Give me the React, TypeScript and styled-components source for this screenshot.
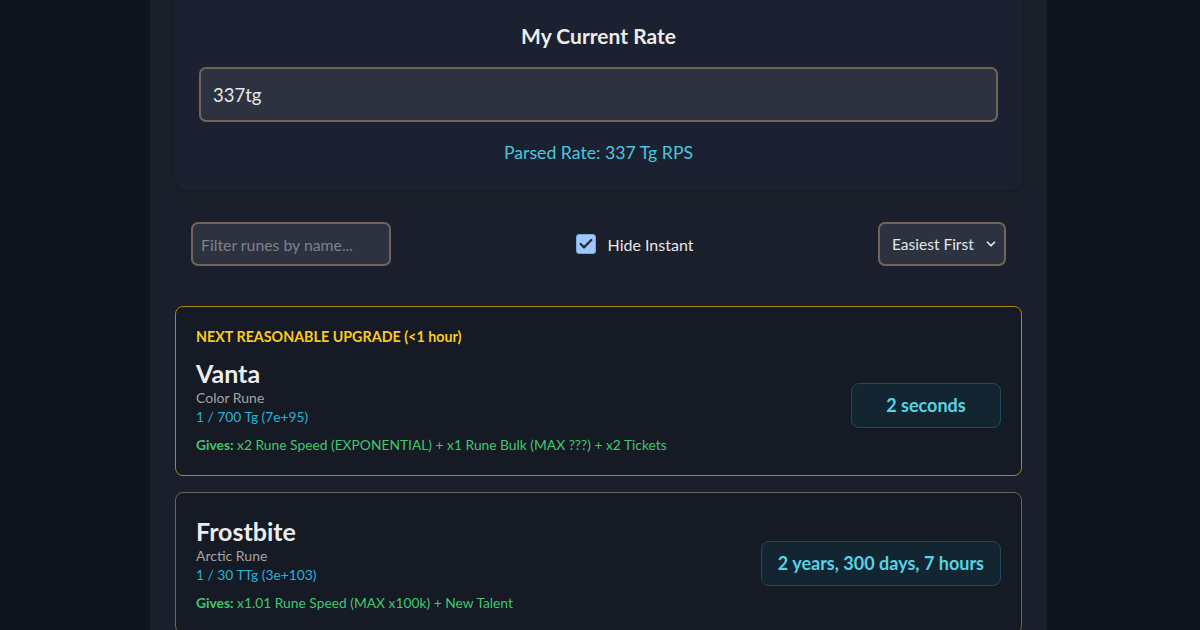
import * as React from "react";
import styled, { createGlobalStyle } from "styled-components";
import { ChevronDown, Check } from "lucide-react";

const GlobalStyle = createGlobalStyle`
  html, body {
    margin: 0;
    padding: 0;
    background: #0f141d;
    font-family: "Lato", "Noto Sans", sans-serif;
    color: #e8e8e8;
    height: 630px;
    overflow: hidden;
  }
  * {
    box-sizing: border-box;
  }
`;

const Page = styled.div`
  width: 897px;
  margin: 0 auto 0 150px;
  min-height: 630px;
  background: #1a1f2b;
  padding: 0 25px;
`;

const RateCard = styled.section`
  background: #1b2130;
  border-radius: 0 0 12px 12px;
  padding: 22px 24px 26px;
  text-align: center;
  box-shadow: 0 2px 6px rgba(0, 0, 0, 0.15);

  h2 {
    margin: 0 0 17px;
    font-size: 21px;
    line-height: 28px;
    font-weight: 700;
    color: #ececec;
  }
`;

const RateInput = styled.input`
  display: block;
  width: 100%;
  height: 55px;
  padding: 0 12px;
  background: #2d3240;
  border: 2px solid #6f6657;
  border-radius: 7px;
  color: #e6e6e6;
  font-family: inherit;
  font-size: 18.5px;
  outline: none;
`;

const Parsed = styled.div`
  margin-top: 20px;
  color: #4cc6de;
  font-size: 17.7px;
  line-height: 22px;
`;

const Controls = styled.div`
  display: flex;
  align-items: center;
  justify-content: space-between;
  padding: 32px 16px 40px;
`;

const Filter = styled.input`
  width: 200px;
  height: 44px;
  padding: 0 8px;
  background: #2d3240;
  border: 2px solid #6f6657;
  border-radius: 7px;
  color: #e6e6e6;
  font-family: inherit;
  font-size: 15.8px;
  outline: none;

  &::placeholder {
    color: #7d818b;
  }
`;

const Toggle = styled.label`
  display: flex;
  align-items: center;
  gap: 12px;
  font-size: 16px;
  color: #e6e6e6;
`;

const Box = styled.span<{ $checked: boolean }>`
  display: flex;
  align-items: center;
  justify-content: center;
  width: 20px;
  height: 20px;
  border-radius: 3px;
  background: ${(p) => (p.$checked ? "#9dc8ff" : "transparent")};
  border: 1px solid #7da6dc;
  color: #2a2d33;
`;

const SelectWrap = styled.div`
  position: relative;

  svg {
    position: absolute;
    right: 8px;
    top: 15px;
    pointer-events: none;
    color: #e6e6e6;
  }
`;

const Select = styled.select`
  appearance: none;
  width: 128px;
  height: 44px;
  padding: 0 0 0 12px;
  background: #2d3240;
  border: 2px solid #6f6657;
  border-radius: 7px;
  color: #e6e6e6;
  font-family: inherit;
  font-size: 15.5px;
  outline: none;
`;

const List = styled.div`
  display: flex;
  flex-direction: column;
  gap: 16px;
`;

const RuneCard = styled.article<{ $highlight?: boolean }>`
  background: #151a25;
  border: 1px solid ${(p) => (p.$highlight ? "#a88810" : "#6a6459")};
  border-radius: 8px;
  padding: 20px;
`;

const Tag = styled.div`
  color: #f9cb1c;
  font-size: 14.3px;
  font-weight: 700;
  line-height: 20px;
  margin-bottom: 8px;
`;

const Row = styled.div`
  display: flex;
  align-items: center;
  justify-content: space-between;
  gap: 20px;
`;

const Info = styled.div`
  display: flex;
  flex-direction: column;

  h3 {
    margin: 3px 0 0;
    font-size: 25px;
    line-height: 30px;
    font-weight: 700;
    color: #ededed;
  }
`;

const Kind = styled.div`
  color: #a3a3a3;
  font-size: 14px;
  line-height: 19px;
`;

const Cost = styled.div`
  color: #23b4d6;
  font-size: 13.8px;
  line-height: 19px;
`;

const Gives = styled.div`
  margin-top: 9px;
  color: #3fc870;
  font-size: 13.8px;
  line-height: 20px;

  b {
    font-weight: 700;
  }
`;

const Time = styled.div`
  min-width: 150px;
  padding: 10px 16px;
  background: #142532;
  border: 1px solid #1d4b5c;
  border-radius: 8px;
  color: #55d3e6;
  font-size: 18px;
  font-weight: 700;
  line-height: 23px;
  text-align: center;
  white-space: nowrap;
`;

interface Rune {
  name: string;
  kind: string;
  cost: string;
  gives: string;
  time: string;
  highlight?: boolean;
}

const runes: Rune[] = [
  {
    name: "Vanta",
    kind: "Color Rune",
    cost: "1 / 700 Tg (7e+95)",
    gives: "x2 Rune Speed (EXPONENTIAL) + x1 Rune Bulk (MAX ???) + x2 Tickets",
    time: "2 seconds",
    highlight: true,
  },
  {
    name: "Frostbite",
    kind: "Arctic Rune",
    cost: "1 / 30 TTg (3e+103)",
    gives: "x1.01 Rune Speed (MAX x100k) + New Talent",
    time: "2 years, 300 days, 7 hours",
  },
];

export default function App() {
  const [rate, setRate] = React.useState("337tg");
  const [hide, setHide] = React.useState(true);

  return (
    <>
      <GlobalStyle />
      <Page>
        <RateCard>
          <h2>My Current Rate</h2>
          <RateInput value={rate} onChange={(e) => setRate(e.target.value)} />
          <Parsed>Parsed Rate: 337 Tg RPS</Parsed>
        </RateCard>

        <Controls>
          <Filter placeholder="Filter runes by name..." />
          <Toggle onClick={() => setHide(!hide)}>
            <Box $checked={hide}>{hide && <Check size={16} strokeWidth={3.5} />}</Box>
            Hide Instant
          </Toggle>
          <SelectWrap>
            <Select defaultValue="easy">
              <option value="easy">Easiest First</option>
              <option value="hard">Hardest First</option>
            </Select>
            <ChevronDown size={14} strokeWidth={3} />
          </SelectWrap>
        </Controls>

        <List>
          {runes.map((r) => (
            <RuneCard key={r.name} $highlight={r.highlight}>
              {r.highlight && <Tag>NEXT REASONABLE UPGRADE (&lt;1 hour)</Tag>}
              <Row>
                <Info>
                  <h3>{r.name}</h3>
                  <Kind>{r.kind}</Kind>
                  <Cost>{r.cost}</Cost>
                  <Gives>
                    <b>Gives:</b> {r.gives}
                  </Gives>
                </Info>
                <Time>{r.time}</Time>
              </Row>
            </RuneCard>
          ))}
        </List>
      </Page>
    </>
  );
}
